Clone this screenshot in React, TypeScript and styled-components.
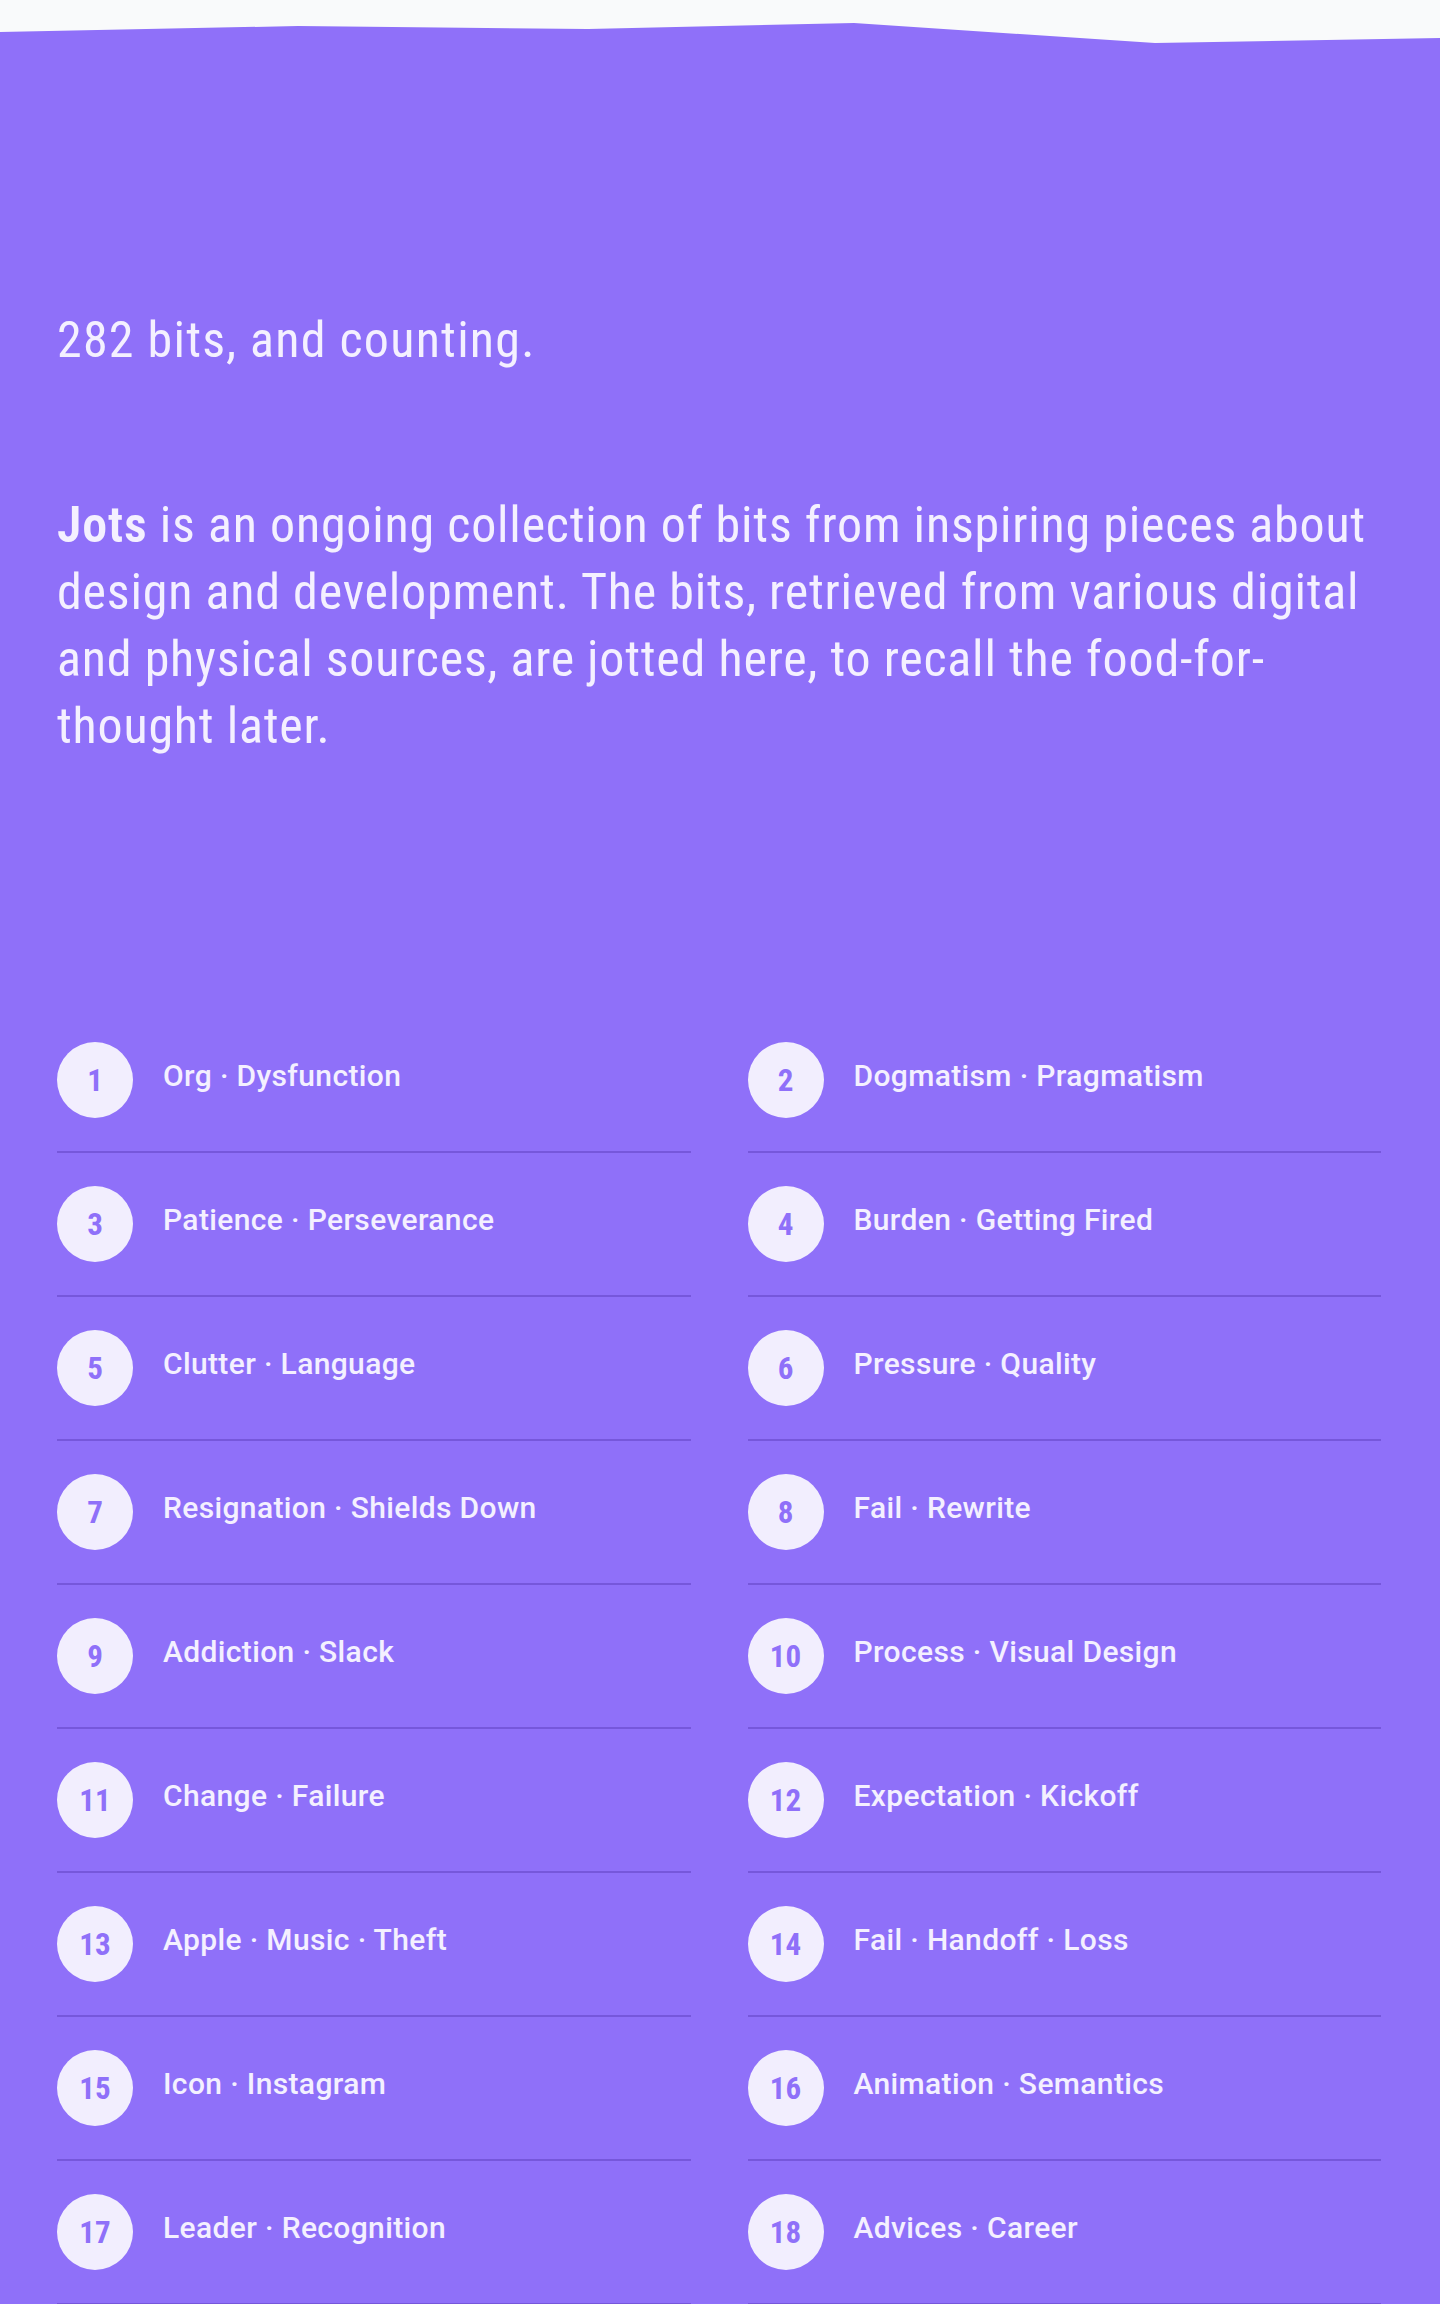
import React from "react";
import styled, { createGlobalStyle } from "styled-components";

const Global = createGlobalStyle`
  html, body {
    margin: 0;
    padding: 0;
    background: #8f70f9;
  }
  body {
    font-family: Roboto, "Liberation Sans", sans-serif;
    color: #f4f0ff;
    -webkit-font-smoothing: antialiased;
  }
`;

const Page = styled.div`
  background: #8f70f9;
  min-height: 2304px;
`;

const Wave = styled.svg`
  display: block;
  width: 100%;
  height: 44px;
`;

const Main = styled.main`
  padding: 0 59px 0 57px;
`;

const Heading = styled.h1`
  margin: 263px 0 0;
  font-size: 50px;
  font-weight: 400;
  line-height: 67px;
  font-stretch: 85%;
  letter-spacing: 0.025em;
`;

const Intro = styled.p`
  margin: 118px 0 0;
  font-size: 50px;
  font-weight: 400;
  line-height: 67px;
  font-stretch: 85%;
  letter-spacing: 0.016em;

  strong {
    font-weight: 600;
  }
`;

const List = styled.ol`
  list-style: none;
  margin: 249px 0 0;
  padding: 0;
  display: grid;
  grid-template-columns: 1fr 1fr;
  column-gap: 57px;
`;

const Item = styled.li`
  display: flex;
  align-items: center;
  gap: 30px;
  padding: 33px 0;
  border-bottom: 2px solid #7657db;
`;

const Badge = styled.span`
  flex: none;
  width: 76px;
  height: 76px;
  border-radius: 50%;
  background: #f2eefe;
  color: #8f70f9;
  display: flex;
  align-items: center;
  justify-content: center;
  font-size: 31px;
  font-weight: 700;
  font-stretch: 85%;
`;

const Title = styled.span`
  font-size: 30px;
  font-weight: 500;
  line-height: 40px;
  letter-spacing: 0.012em;
  padding-bottom: 8px;
`;

const bits: string[][] = [
  ["Org", "Dysfunction"],
  ["Dogmatism", "Pragmatism"],
  ["Patience", "Perseverance"],
  ["Burden", "Getting Fired"],
  ["Clutter", "Language"],
  ["Pressure", "Quality"],
  ["Resignation", "Shields Down"],
  ["Fail", "Rewrite"],
  ["Addiction", "Slack"],
  ["Process", "Visual Design"],
  ["Change", "Failure"],
  ["Expectation", "Kickoff"],
  ["Apple", "Music", "Theft"],
  ["Fail", "Handoff", "Loss"],
  ["Icon", "Instagram"],
  ["Animation", "Semantics"],
  ["Leader", "Recognition"],
  ["Advices", "Career"],
];

export default function App() {
  return (
    <Page>
      <Global />
      <Wave viewBox="0 0 1440 44" preserveAspectRatio="none" aria-hidden="true">
        <polygon
          points="0,0 1440,0 1440,38 1155,43 854,23 588,29 298,26 0,32"
          fill="#f9fafb"
        />
      </Wave>
      <Main>
        <Heading>282 bits, and counting.</Heading>
        <Intro>
          <strong>Jots</strong> is an ongoing collection of bits from inspiring
          pieces about design and development. The bits, retrieved from various
          digital and physical sources, are jotted here, to recall the
          food-for-thought later.
        </Intro>
        <List>
          {bits.map((tags, i) => (
            <Item key={i}>
              <Badge>{i + 1}</Badge>
              <Title>{tags.join(" · ")}</Title>
            </Item>
          ))}
        </List>
      </Main>
    </Page>
  );
}
